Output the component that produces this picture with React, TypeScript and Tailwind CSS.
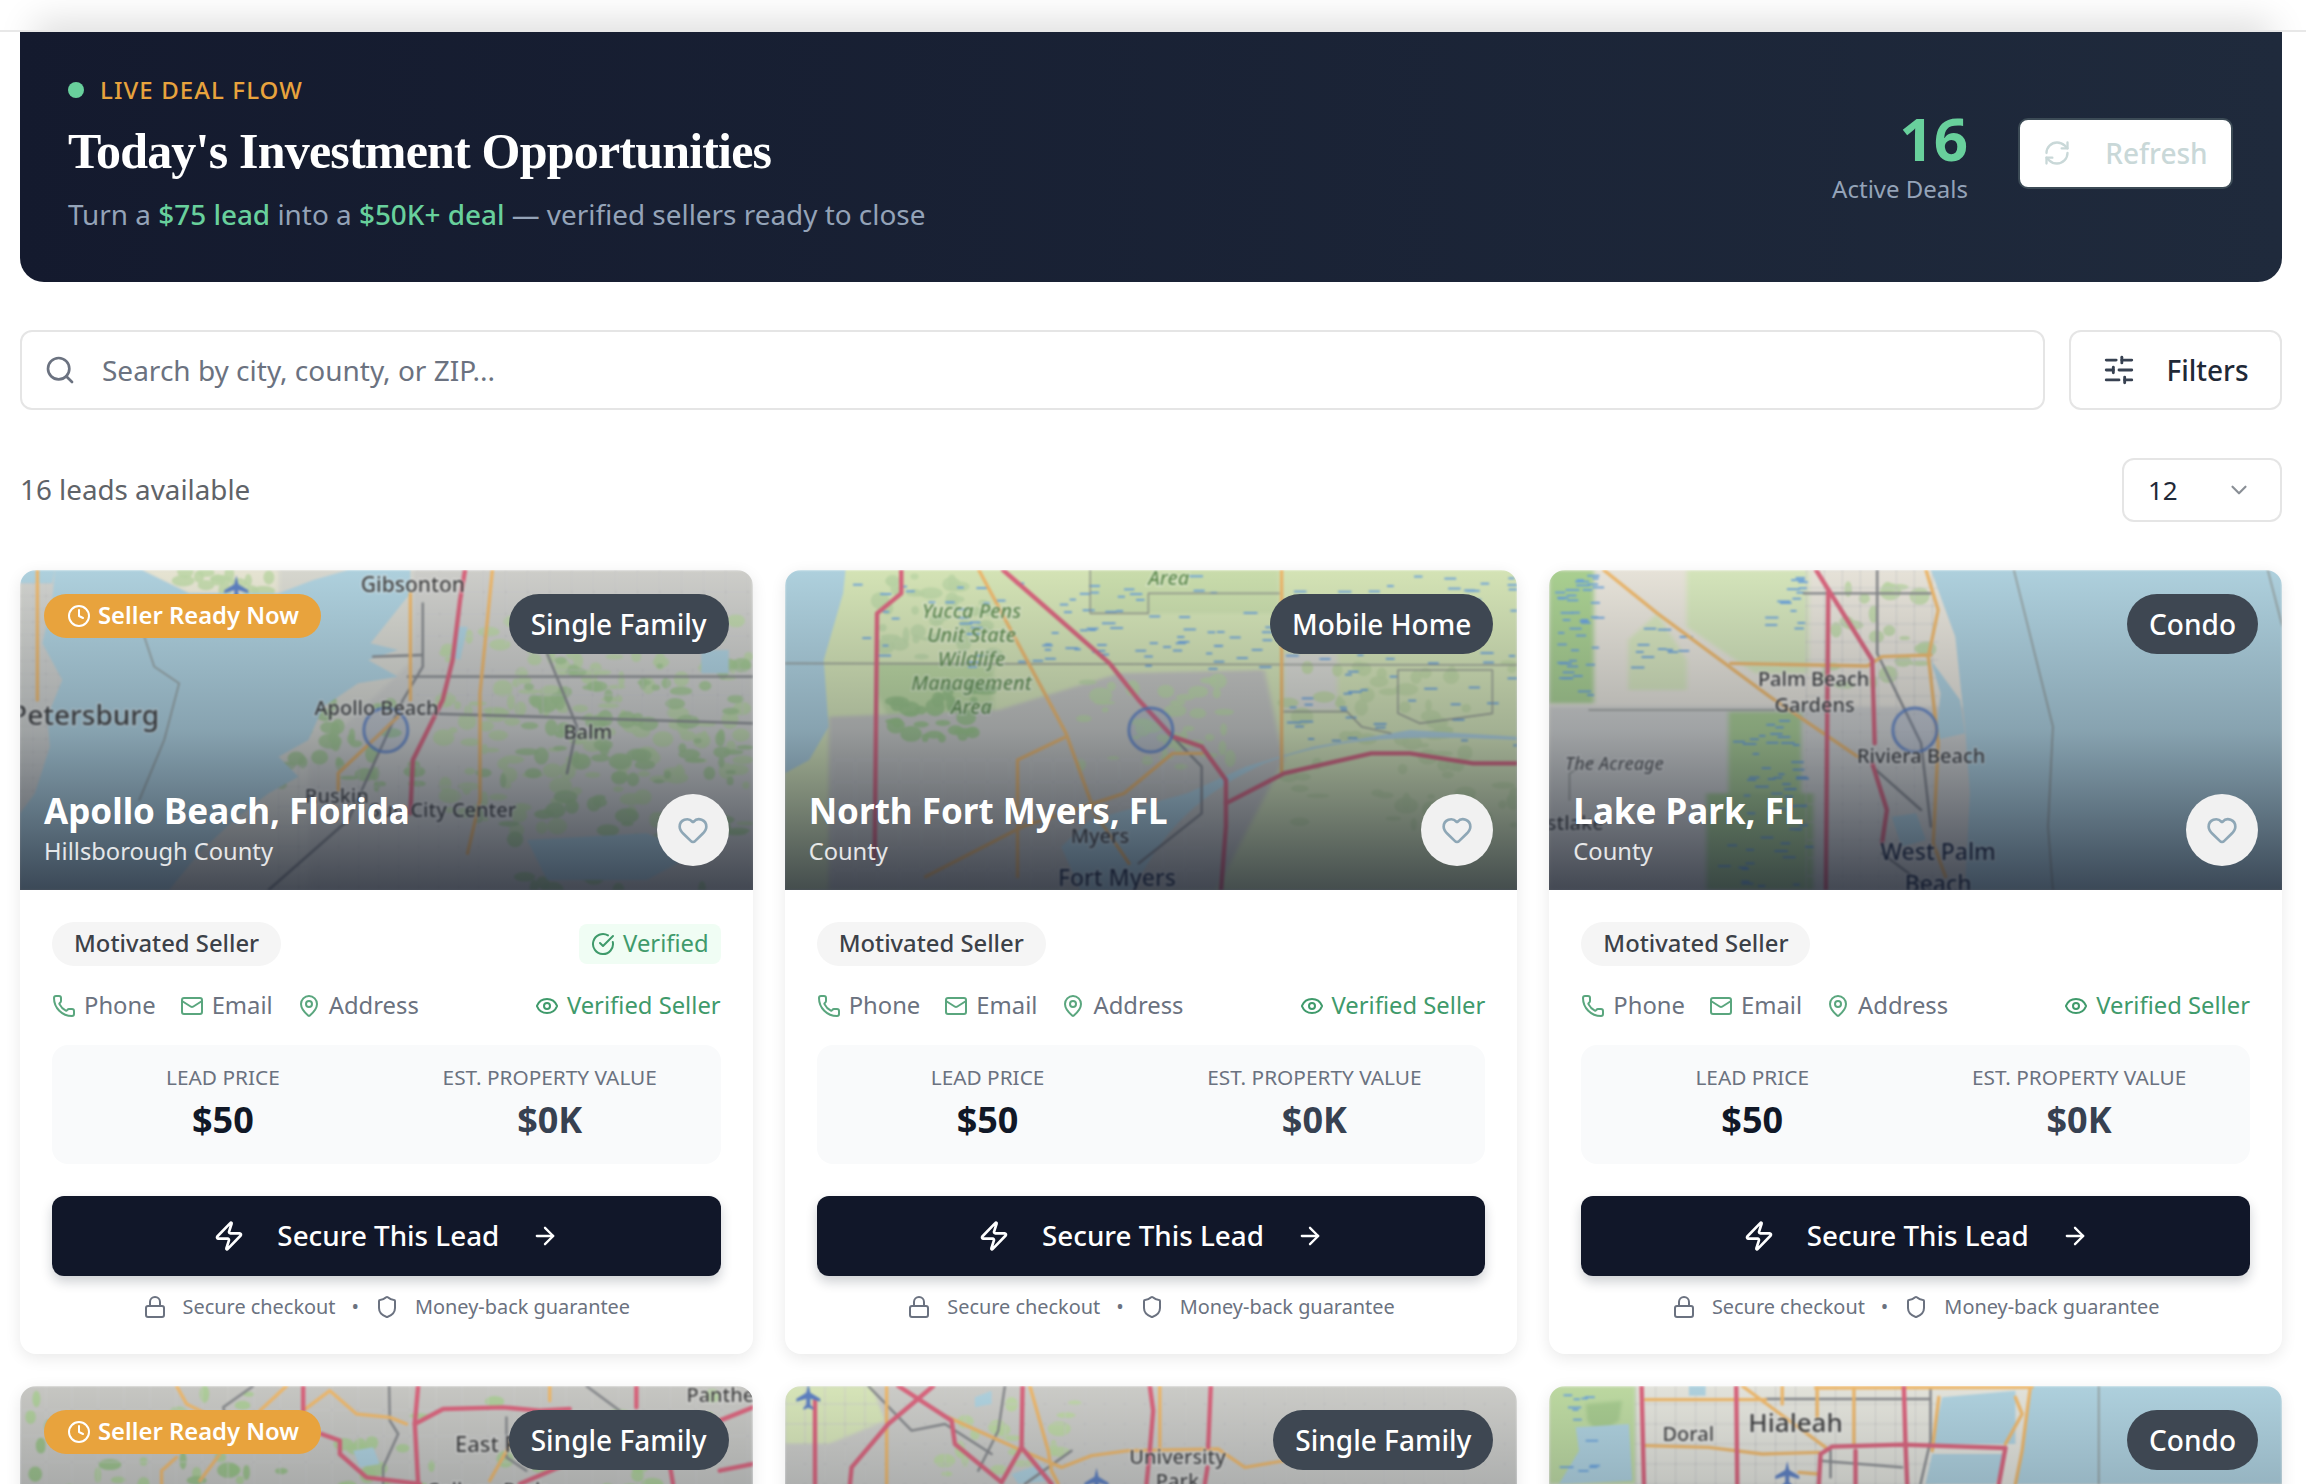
import React from "react";
import { Clock, Heart, CircleCheckBig, Phone, Mail, MapPin, Eye, Zap, ArrowRight, Lock, Shield, Search, SlidersHorizontal, RefreshCw, ChevronDown } from "lucide-react";

type Label = [string, number, number, number, string?];
type MapCfg = {
  sx: number; sy: number; ox: number; oy: number; base: string; seed: number;
  areas?: [string, string][];
  grid?: [number, number, number, number, number][];
  blobs?: [number, number, number, number, number, string][];
  dash?: [number, number, number, number, number][];
  water?: string[]; gray?: string[]; thin?: string[]; orange?: string[]; pink?: string[];
  labels?: Label[];
  plane?: [number, number][];
};

const GREEN = "#bcd6a6";
const DEEP = "#a3c890";

const maps: MapCfg[] = [
  {
    sx: 2.01, sy: 3, ox: 40, oy: 30, base: "#d6d6ce", seed: 7,
    areas: [["#cdcdc9", "M830,30 L1514,30 L1514,990 L620,990 L620,600 L830,300 Z"], ["#cfd0cc", "M40,30 L130,30 L130,360 L100,700 L40,760 Z"], ["#e6e4d2", "M280,30 L560,30 L560,100 L380,100 Z"]],
    grid: [[40, 30, 80, 680, 26], [840, 30, 670, 220, 44], [840, 330, 670, 140, 50], [560, 620, 420, 370, 40]],
    blobs: [[880, 180, 630, 640, 170, GREEN], [560, 420, 280, 260, 40, DEEP], [1060, 300, 440, 300, 50, DEEP], [950, 560, 560, 430, 60, DEEP], [320, 30, 230, 70, 14, GREEN]],
    water: ["M110,30 L285,30 L380,100 L560,100 L630,60 L700,30 L825,30 L825,100 L745,250 L800,270 L740,300 L800,350 L720,370 L650,440 L620,540 L560,590 L600,650 L540,700 L470,780 L400,880 L340,990 L40,990 L40,760 L70,700 L100,560 L95,470 L125,360 L85,250 L105,120 Z", "M1410,270 L1465,270 L1465,340 L1410,340 Z", "M40,30 L110,30 L105,70 L40,70Z", "M920,200 L940,200 L925,300 L905,290Z", "M1060,840 L1300,820 L1400,880 L1300,960 L1100,960 Z"],
    gray: ["M850,130 L850,320 L810,420 L700,780 L540,990", "M750,290 L850,285", "M1100,280 L1160,500 L1140,640", "M820,350 L1514,350", "M850,460 L1514,490"],
    thin: ["M290,230 L310,320 L360,370 L330,540 L280,720"],
    orange: ["M990,30 L965,400 L965,720 L940,880", "M825,100 L825,420", "M800,470 L680,640 L680,690", "M75,30 L75,420"],
    pink: ["M935,30 L925,120 L910,300 L890,420 L860,510 L830,600 L825,760"],
    labels: [["Gibsonton", 830, 72, 21], ["Petersburg", 170, 462, 28], ["Apollo Beach", 757, 444, 20], ["Balm", 1182, 516, 20], ["Ruskin", 677, 706, 20], ["Sun City Center", 890, 750, 20]],
    plane: [[475, 85]],
  },
  {
    sx: 2.063, sy: 3, ox: 10, oy: 30, base: "#d4e3b5", seed: 13,
    areas: [["#bcd7a0", "M200,310 L440,310 L440,560 L330,600 L240,520 L200,400 Z"], ["#c4c4bf", "M100,470 L450,450 L700,340 L1000,330 L1040,600 L900,990 L100,990 Z"], ["#dadad2", "M1040,280 L1150,280 L1150,450 L1040,450Z"], ["#c9dcab", "M640,30 L1030,30 L1030,160 L640,160 Z"]],
    grid: [[110, 600, 760, 390, 44]],
    blobs: [[200, 40, 250, 260, 40, GREEN], [220, 380, 220, 170, 34, "#97c084"], [620, 360, 330, 260, 40, GREEN], [1040, 300, 480, 500, 70, "#c1d8a3"]],
    dash: [[140, 40, 1380, 280, 110], [1040, 300, 480, 260, 30], [540, 150, 440, 180, 24]],
    water: ["M10,30 L135,30 L130,100 L90,300 L100,500 L60,600 L10,640 Z", "M1520,540 C1300,525 1150,530 1000,610 C900,680 800,770 730,990 L620,990 L580,860 L640,780 L840,700 L960,620 L1100,560 L1300,510 L1520,530 Z"],
    gray: ["M750,440 L870,620 L870,760 L740,910"],
    thin: ["M10,310 L1520,315", "M1040,455 L1170,455 L1200,500 L1260,520", "M1275,330 L1470,330 L1470,460 L1320,490 L1275,460 Z", "M640,30 L640,160 L760,160 L760,100 L1030,100"],
    orange: ["M410,30 L590,520 L610,600 L650,760 L720,910", "M1035,30 L1035,640", "M590,530 L490,600 L490,950", "M300,950 L500,800 L710,700 L810,580 L870,580"],
    pink: ["M460,30 L570,170 L680,310 L740,420 L810,530 L870,560 L920,660 L920,800 L910,990", "M250,30 L250,100 L200,160 L195,900", "M920,730 L1040,640 L1220,580 L1300,580 L1430,610 L1520,610"],
    labels: [["Area", 802, 52, 20, "#5d8a4c"], ["Yucca Pens", 395, 152, 20, "#5d8a4c"], ["Unit State", 395, 224, 20, "#5d8a4c"], ["Wildlife", 395, 296, 20, "#5d8a4c"], ["Management", 395, 368, 20, "#5d8a4c"], ["Area", 395, 440, 20, "#5d8a4c"], ["Myers", 660, 828, 20], ["Fort Myers", 695, 950, 23, "#1a2540"]],
  },
  {
    sx: 2.047, sy: 3, ox: 18, oy: 30, base: "#e6e2d8", seed: 23,
    areas: [["#a9cf90", "M18,30 L110,30 L110,430 L18,430 Z"], ["#d4e4ba", "M300,30 L550,30 L550,340 L440,340 L300,200Z"], ["#d6e4bc", "M180,240 L240,160 L300,300 L300,390 L180,390Z"], ["#d0d0cd", "M18,440 L1000,440 L880,990 L18,990Z"], ["#a9cc90", "M385,455 L535,455 L535,720 L385,720 Z"], ["#a3c78c", "M340,700 L560,700 L560,990 L340,990 Z"]],
    grid: [[545, 30, 270, 960, 36]],
    blobs: [[550, 80, 260, 300, 24, GREEN]],
    dash: [[30, 40, 80, 380, 40], [460, 40, 70, 170, 14], [180, 200, 110, 120, 12], [395, 470, 130, 240, 30], [350, 710, 200, 270, 24]],
    water: ["M800,30 L850,230 L870,500 L880,700 L870,990 L1520,990 L1520,30 Z", "M800,300 L860,420 L870,520 L810,540 L820,400 Z", "M720,770 L770,760 L790,840 L740,860Z"],
    gray: ["M690,30 L690,280 L780,550 L800,800", "M680,620 L780,750", "M700,880 L800,990", "M540,100 L800,100"],
    thin: ["M970,30 L1050,500 L1040,800 L1050,990", "M1490,30 L1520,200", "M100,450 L480,450", "M60,720 L60,640 L110,600"],
    orange: ["M130,30 L240,160 L470,410 L650,590", "M390,310 L670,318 L700,290 L800,285", "M790,30 L815,150 L795,290 L815,550 L805,850 L830,950"],
    pink: ["M565,30 L680,300 L685,550", "M590,90 L585,990", "M680,610 L710,750 L700,850"],
    labels: [["Palm Beach", 560, 356, 20], ["Gardens", 562, 434, 20], ["Riviera Beach", 780, 586, 20], ["The Acreage", 152, 610, 18, "#555555"], ["estlake", 60, 788, 20], ["West Palm", 815, 872, 23, "#1a2540"], ["Beach", 815, 970, 23, "#1a2540"]],
  },
  {
    sx: 3, sy: 3, ox: 0, oy: 6, base: "#c6c6c2", seed: 31,
    grid: [[0, 0, 2200, 1000, 52]],
    blobs: [[0, 0, 2200, 900, 190, "#a9cc93"], [0, 100, 900, 800, 50, "#93bd80"]],
    water: ["M1000,200 L1060,190 L1080,240 L1020,250Z"],
    gray: ["M1108,6 L1110,110 L1135,150 L1090,250 L1090,300", "M1700,6 L1800,80", "M700,6 L610,70 L620,110", "M1460,100 L1460,220 L1520,260"],
    orange: ["M470,6 L500,60 L560,90", "M800,6 L720,80", "M850,80 L930,20 L1010,90 L1110,100 L1160,120", "M600,210 L540,290", "M470,220 L425,260 L425,300", "M1590,6 L1590,50 M1500,130 L1410,290"],
    pink: ["M1195,6 L1185,120 L1195,300", "M1185,120 L1270,75 L1450,70 L1560,80 L1650,75", "M850,6 L850,80", "M905,150 L960,170 L960,210 L1040,280 L1200,300", "M1850,6 L1850,70", "M2100,110 L2200,70", "M1640,240 L1500,300", "M1950,240 L1960,300", "M2100,260 L2200,240"],
    labels: [["Panthe", 2102, 30, 20], ["East P", 1400, 176, 22], ["College Park", 1400, 316, 20]],
  },
  {
    sx: 3, sy: 3, ox: 0, oy: 6, base: "#cbcbc7", seed: 41,
    grid: [[0, 0, 2200, 1000, 40]],
    areas: [["#d6e4b8", "M0,6 L260,6 L300,110 L130,180 L0,180Z"]],
    blobs: [[400, 30, 500, 250, 20, "#bcd8a0"]],
    water: ["M680,270 L770,240 L800,290 L700,300Z", "M570,40 L620,20 L620,60 L570,70Z"],
    gray: ["M250,6 L380,140 L480,120 L620,210", "M660,6 L640,140 L580,260", "M860,200 L720,300"],
    orange: ["M305,6 L305,300", "M1125,6 L1125,190", "M735,6 L790,200 L800,260 L820,300", "M490,100 L700,195 L830,250 L920,215 L1030,200 L1300,195 L1380,250 L1500,230"],
    pink: ["M90,50 L90,300", "M340,6 L500,110 L510,180 L650,295", "M445,6 L310,120 L200,250 L195,300", "M713,6 L710,190 L650,295", "M710,190 L800,300", "M1095,6 L1105,80 L1095,200 L1085,300", "M1278,6 L1270,190", "M1268,250 L1260,300"],
    labels: [["University", 1178, 218, 20], ["Park", 1178, 290, 20]],
    plane: [[70, 38], [935, 290]],
  },
  {
    sx: 3, sy: 3, ox: 0, oy: 6, base: "#e2e2da", seed: 53,
    areas: [["#bcd8a0", "M0,6 L260,6 L260,300 L0,300Z"], ["#a6c98e", "M110,60 L220,50 L210,110 L150,150 L115,110Z"]],
    grid: [[260, 0, 900, 1000, 40]],
    dash: [[0, 30, 130, 230, 12]],
    water: ["M1180,40 L1400,20 L1400,180 L1150,180 Z", "M1150,210 L1370,210 L1340,300 L1130,300Z", "M1450,6 L2200,6 L2200,300 L1400,300 Z", "M80,130 L240,120 L250,290 L30,300 L90,200 Z", "M420,6 L470,6 L470,35 L420,35Z"],
    gray: ["M650,45 L1140,45", "M1145,6 L1145,170 L1115,300", "M810,230 L1060,250", "M845,200 L845,280"],
    thin: ["M1650,6 L1650,300"],
    orange: ["M290,47 L650,47", "M290,185 L480,190 L640,210 L810,205", "M580,6 L830,190", "M915,6 L915,180", "M805,6 L805,100", "M700,6 L700,60", "M800,12 L1450,10", "M1150,200 L1170,40", "M1445,6 L1430,120 L1420,200 L1400,300", "M1400,40 L1420,90 L1370,180", "M750,265 L810,270"],
    pink: ["M278,6 L285,300", "M562,6 L565,300", "M1065,6 L1070,180 L1075,300", "M810,300 L815,210 L850,188 L1060,182 L1370,192 L1350,300", "M920,200 L920,300"],
    labels: [["Doral", 418, 150, 20], ["Hialeah", 740, 115, 26]],
    plane: [[715, 270]],
  },
];

function rng(seed: number) {
  let s = seed;
  return () => {
    s = (s * 16807) % 2147483647;
    return (s % 100000) / 100000;
  };
}

function MapArt({ cfg }: { cfg: MapCfg }) {
  const r = rng(cfg.seed * 1000 + 17);
  const ns = { vectorEffect: "non-scaling-stroke" as const, fill: "none", strokeLinecap: "round" as const, strokeLinejoin: "round" as const };
  const lx = (x: number) => (x - cfg.ox) / cfg.sx;
  const ly = (y: number) => (y - cfg.oy) / cfg.sy;
  const gridLines: string[] = [];
  (cfg.grid ?? []).forEach(([x, y, w, h, st]) => {
    const stepX = st * cfg.sx * 0.5;
    const stepY = st * cfg.sy * 0.5;
    for (let a = x; a < x + w; a += stepX) gridLines.push(`M${a},${y} L${a},${y + h}`);
    for (let b = y; b < y + h; b += stepY) gridLines.push(`M${x},${b} L${x + w},${b}`);
  });
  const fid = `soft${cfg.seed}`;
  return (
    <svg viewBox="0 0 733 320" preserveAspectRatio="none" className="absolute inset-0 w-full h-full blur-[0.8px]">
      <defs>
        <filter id={fid} x="-5%" y="-5%" width="110%" height="110%"><feGaussianBlur stdDeviation="4" /></filter>
      </defs>
      <rect width="733" height="320" fill={cfg.base} />
      <g transform={`scale(${1 / cfg.sx},${1 / cfg.sy}) translate(${-cfg.ox},${-cfg.oy})`}>
        <g filter={`url(#${fid})`}>
          {(cfg.areas ?? []).map(([c, d], i) => <path key={i} d={d} fill={c} />)}
        </g>
        {(cfg.blobs ?? []).flatMap(([x, y, w, h, n, c], i) =>
          Array.from({ length: n }, (_, k) => {
            const rx = (3 + r() * 9) * cfg.sx;
            const ry = (2 + r() * 7) * cfg.sy;
            return <ellipse key={`${i}-${k}`} cx={x + r() * w} cy={y + r() * h} rx={rx} ry={ry} fill={c} fillOpacity="0.85" />;
          })
        )}
        <path d={gridLines.join(" ")} stroke="#ffffff" strokeOpacity="0.35" strokeWidth="1.6" {...ns} />
        <path d={gridLines.join(" ")} stroke="#8f8f8d" strokeOpacity="0.45" strokeWidth="0.8" {...ns} />
        {(cfg.water ?? []).map((d, i) => <path key={i} d={d} fill="#aed0dd" />)}
        {(cfg.dash ?? []).flatMap(([x, y, w, h, n], i) =>
          Array.from({ length: n }, (_, k) => (
            <rect key={`${i}-${k}`} x={x + r() * w} y={y + r() * h} width={(6 + r() * 8) * cfg.sx} height={1.8 * cfg.sy} fill="#6aa2dc" />
          ))
        )}
        {(cfg.thin ?? []).map((d, i) => <path key={i} d={d} stroke="#8b8f8a" strokeWidth="1.6" strokeOpacity="0.8" {...ns} />)}
        {(cfg.gray ?? []).map((d, i) => <path key={i} d={d} stroke="#85878a" strokeWidth="2.4" {...ns} />)}
        {(cfg.orange ?? []).map((d, i) => <path key={i} d={d} stroke="#ecb76c" strokeWidth="3.4" {...ns} />)}
        {(cfg.pink ?? []).map((d, i) => <path key={i} d={d} stroke="#d8647c" strokeWidth="4.4" {...ns} />)}
      </g>
      {(cfg.plane ?? []).map(([x, y], i) => (
        <path key={i} transform={`translate(${lx(x)},${ly(y)})`} d="M0,-13 L2,-4 L12,2 L12,5 L2,2 L2,8 L5,11 L5,13 L0,11 L-5,13 L-5,11 L-2,8 L-2,2 L-12,5 L-12,2 L-2,-4 Z" fill="#5d7fc0" />
      ))}
      <circle cx="366" cy="160" r="22" fill="#5b7fc4" fillOpacity="0.12" stroke="#5b7fc4" strokeWidth="3" strokeOpacity="0.85" />
      {(cfg.labels ?? []).map(([t, x, y, size, color], i) => (
        <text key={i} x={lx(x)} y={ly(y)} textAnchor="middle" dominantBaseline="central" fontSize={size} fontWeight={500} fontFamily="'Noto Sans', sans-serif" fontStyle={color === "#5d8a4c" || t === "The Acreage" ? "italic" : "normal"} fill={color ?? "#3e3e3e"} stroke="#ffffff" strokeOpacity="0.4" strokeWidth="2.5" paintOrder="stroke">{t}</text>
      ))}
    </svg>
  );
}

type Lead = { city: string; county: string; type: string; hot?: boolean };
const leads: Lead[] = [
  { city: "Apollo Beach, Florida", county: "Hillsborough County", type: "Single Family", hot: true },
  { city: "North Fort Myers, FL", county: "County", type: "Mobile Home" },
  { city: "Lake Park, FL", county: "County", type: "Condo" },
  { city: "Coral Springs, FL", county: "County", type: "Single Family", hot: true },
  { city: "Tamarac, FL", county: "County", type: "Single Family" },
  { city: "Miami Lakes, FL", county: "County", type: "Condo" },
];

function Card({ lead, cfg }: { lead: Lead; cfg: MapCfg }) {
  return (
    <div className="bg-white rounded-[16px] overflow-hidden shadow-[0_4px_16px_rgba(0,0,0,0.09)]">
      <div className="relative h-[320px] overflow-hidden">
        <MapArt cfg={cfg} />
        <div className="absolute inset-0 bg-gradient-to-t from-[#151c2bc0] via-[#1f293745] to-transparent" />
        {lead.hot && (
          <div className="absolute left-[24px] top-[24px] h-[44px] pl-[23px] pr-[22px] rounded-full bg-[#e8a33d] flex items-center gap-[7px] text-white text-[23.8px] font-semibold">
            <Clock className="w-[24px] h-[24px]" strokeWidth={2} />
            <span>Seller Ready Now</span>
          </div>
        )}
        <div className="absolute right-[24px] top-[24px] h-[60px] px-[22px] rounded-full bg-[#3e4752] flex items-center text-white text-[28px] font-medium">{lead.type}</div>
        <div className="absolute left-[24px] bottom-[24px] text-white">
          <div className="text-[35px] leading-[50px] font-bold">{lead.city}</div>
          <div className="text-[23.7px] leading-[30px] text-white/85">{lead.county}</div>
        </div>
        <div className="absolute right-[24px] bottom-[24px] w-[72px] h-[72px] rounded-full bg-[#f1f1f1] flex items-center justify-center">
          <Heart className="w-[32px] h-[32px] text-[#8ea7b6]" strokeWidth={2} />
        </div>
      </div>
      <div className="px-[32px] pt-[32px] pb-[32px]">
        <div className="flex items-center justify-between h-[44px]">
          <span className="h-[44px] px-[22px] rounded-full bg-[#f5f5f5] text-[#3c4148] text-[23.8px] font-medium flex items-center">Motivated Seller</span>
          {lead.city.startsWith("Apollo") && (
            <span className="h-[40px] px-[12px] rounded-[8px] bg-[#f0fdf4] text-[#3f9a6b] text-[23.8px] flex items-center gap-[8px]">
              <CircleCheckBig className="w-[24px] h-[24px]" strokeWidth={2} />Verified
            </span>
          )}
        </div>
        <div className="mt-[18px] h-[44px] flex items-center justify-between text-[23.8px] text-[#6b7280]">
          <div className="flex items-center gap-[24px]">
            <span className="flex items-center gap-[8px]"><Phone className="w-[24px] h-[24px] text-[#5aa67e]" strokeWidth={2} />Phone</span>
            <span className="flex items-center gap-[8px]"><Mail className="w-[24px] h-[24px] text-[#5aa67e]" strokeWidth={2} />Email</span>
            <span className="flex items-center gap-[8px]"><MapPin className="w-[24px] h-[24px] text-[#5aa67e]" strokeWidth={2} />Address</span>
          </div>
          <span className="flex items-center gap-[8px] text-[#3f9a6b]"><Eye className="w-[24px] h-[24px]" strokeWidth={2} />Verified Seller</span>
        </div>
        <div className="mt-[17px] h-[119px] rounded-[16px] bg-[#f9fafb] px-[24px] pt-[18px] grid grid-cols-2 gap-[33px] items-start">
          <div className="text-center">
            <div className="text-[20.8px] leading-[28px] text-[#6b7280] uppercase">Lead Price</div>
            <div className="mt-[7px] text-[36px] leading-[44px] font-bold text-[#111827]">$50</div>
          </div>
          <div className="text-center">
            <div className="text-[20.8px] leading-[28px] text-[#6b7280] uppercase whitespace-nowrap">Est. Property Value</div>
            <div className="mt-[7px] text-[36px] leading-[44px] font-bold text-[#374151]">$0K</div>
          </div>
        </div>
        <div className="mt-[32px] h-[80px] rounded-[12px] bg-[#111729] text-white text-[27.8px] font-medium flex items-center justify-center gap-[32px] shadow-[0_6px_12px_rgba(17,23,41,0.2)]">
          <Zap className="w-[32px] h-[32px]" strokeWidth={2} />
          <span>Secure This Lead</span>
          <ArrowRight className="w-[28px] h-[28px]" strokeWidth={2} />
        </div>
        <div className="mt-[16px] h-[30px] flex items-center justify-center text-[19.9px] text-[#6b7280]">
          <Lock className="w-[24px] h-[24px] mr-[16px]" strokeWidth={2} />
          <span>Secure checkout</span>
          <span className="mx-[16px] text-[#6b7280]">•</span>
          <Shield className="w-[24px] h-[24px] mr-[16px]" strokeWidth={2} />
          <span>Money-back guarantee</span>
        </div>
      </div>
    </div>
  );
}

export default function App() {
  return (
    <div className="h-[1484px] overflow-hidden bg-white font-['Noto_Sans',sans-serif]">
      <div className="h-[32px] overflow-hidden bg-white relative border-b-2 border-[#e8e8e8]">
        <div className="mt-[32px] mx-[44px] h-[20px] shadow-[0_0_36px_10px_rgba(0,0,0,0.14)]" />
      </div>
      <div className="pl-[20px] pr-[24px]">
        <div className="h-[250px] rounded-b-[24px] bg-gradient-to-r from-[#141a2e] to-[#1f2a3c] pl-[48px] pr-[49px] flex items-center justify-between">
          <div className="pb-[6px]">
            <div className="flex items-center gap-[16px] h-[30px]">
              <span className="w-[16px] h-[16px] rounded-full bg-[#68d09c]" />
              <span className="text-[#e8a33d] text-[24px] font-medium tracking-[1.1px]">LIVE DEAL FLOW</span>
            </div>
            <div className="mt-[16px] text-white text-[50px] leading-[60px] font-bold tracking-[-0.8px] font-['Liberation_Serif',serif]">Today's Investment Opportunities</div>
            <div className="mt-[13px] text-[#94a3b8] text-[27.9px] leading-[40px]">Turn a <span className="text-[#68d09c] font-medium">$75 lead</span> into a <span className="text-[#68d09c] font-medium">$50K+ deal</span> — verified sellers ready to close</div>
          </div>
          <div className="flex items-center gap-[50px] pb-[8px]">
            <div className="text-right">
              <div className="text-[#68d09c] text-[60px] leading-[72px] font-bold">16</div>
              <div className="text-[#94a3b8] text-[24px] leading-[30px]">Active Deals</div>
            </div>
            <div className="w-[215px] h-[71px] rounded-[10px] bg-white border-2 border-[#3c4b56] flex items-center justify-center gap-[34px] text-[#c9d8d8] text-[28px] font-medium">
              <RefreshCw className="w-[28px] h-[28px]" strokeWidth={2} />
              <span>Refresh</span>
            </div>
          </div>
        </div>
        <div className="mt-[48px] flex gap-[24px]">
          <div className="flex-1 h-[80px] rounded-[12px] border-2 border-[#e5e5e5] flex items-center pl-[22px] gap-[26px] text-[28px] text-[#6b7280]">
            <Search className="w-[32px] h-[32px] text-[#6b7280]" strokeWidth={2} />
            <span>Search by city, county, or ZIP...</span>
          </div>
          <div className="w-[213px] h-[80px] rounded-[12px] border-2 border-[#e5e5e5] flex items-center justify-center gap-[30px] text-[28px] text-[#1f2937] font-medium">
            <SlidersHorizontal className="w-[34px] h-[34px] text-[#374151]" strokeWidth={2} />
            <span>Filters</span>
          </div>
        </div>
        <div className="mt-[48px] h-[64px] flex items-center justify-between">
          <span className="text-[27.8px] text-[#5f6368]">16 leads available</span>
          <div className="w-[160px] h-[64px] rounded-[12px] border-2 border-[#e5e5e5] flex items-center justify-between pl-[24px] pr-[28px] text-[26px] text-[#1f2937]">
            <span>12</span>
            <ChevronDown className="w-[26px] h-[26px] text-[#8a8f96]" strokeWidth={2} />
          </div>
        </div>
        <div className="mt-[48px] grid grid-cols-3 gap-[32px]">
          {leads.map((l, i) => <Card key={i} lead={l} cfg={maps[i]} />)}
        </div>
      </div>
    </div>
  );
}
